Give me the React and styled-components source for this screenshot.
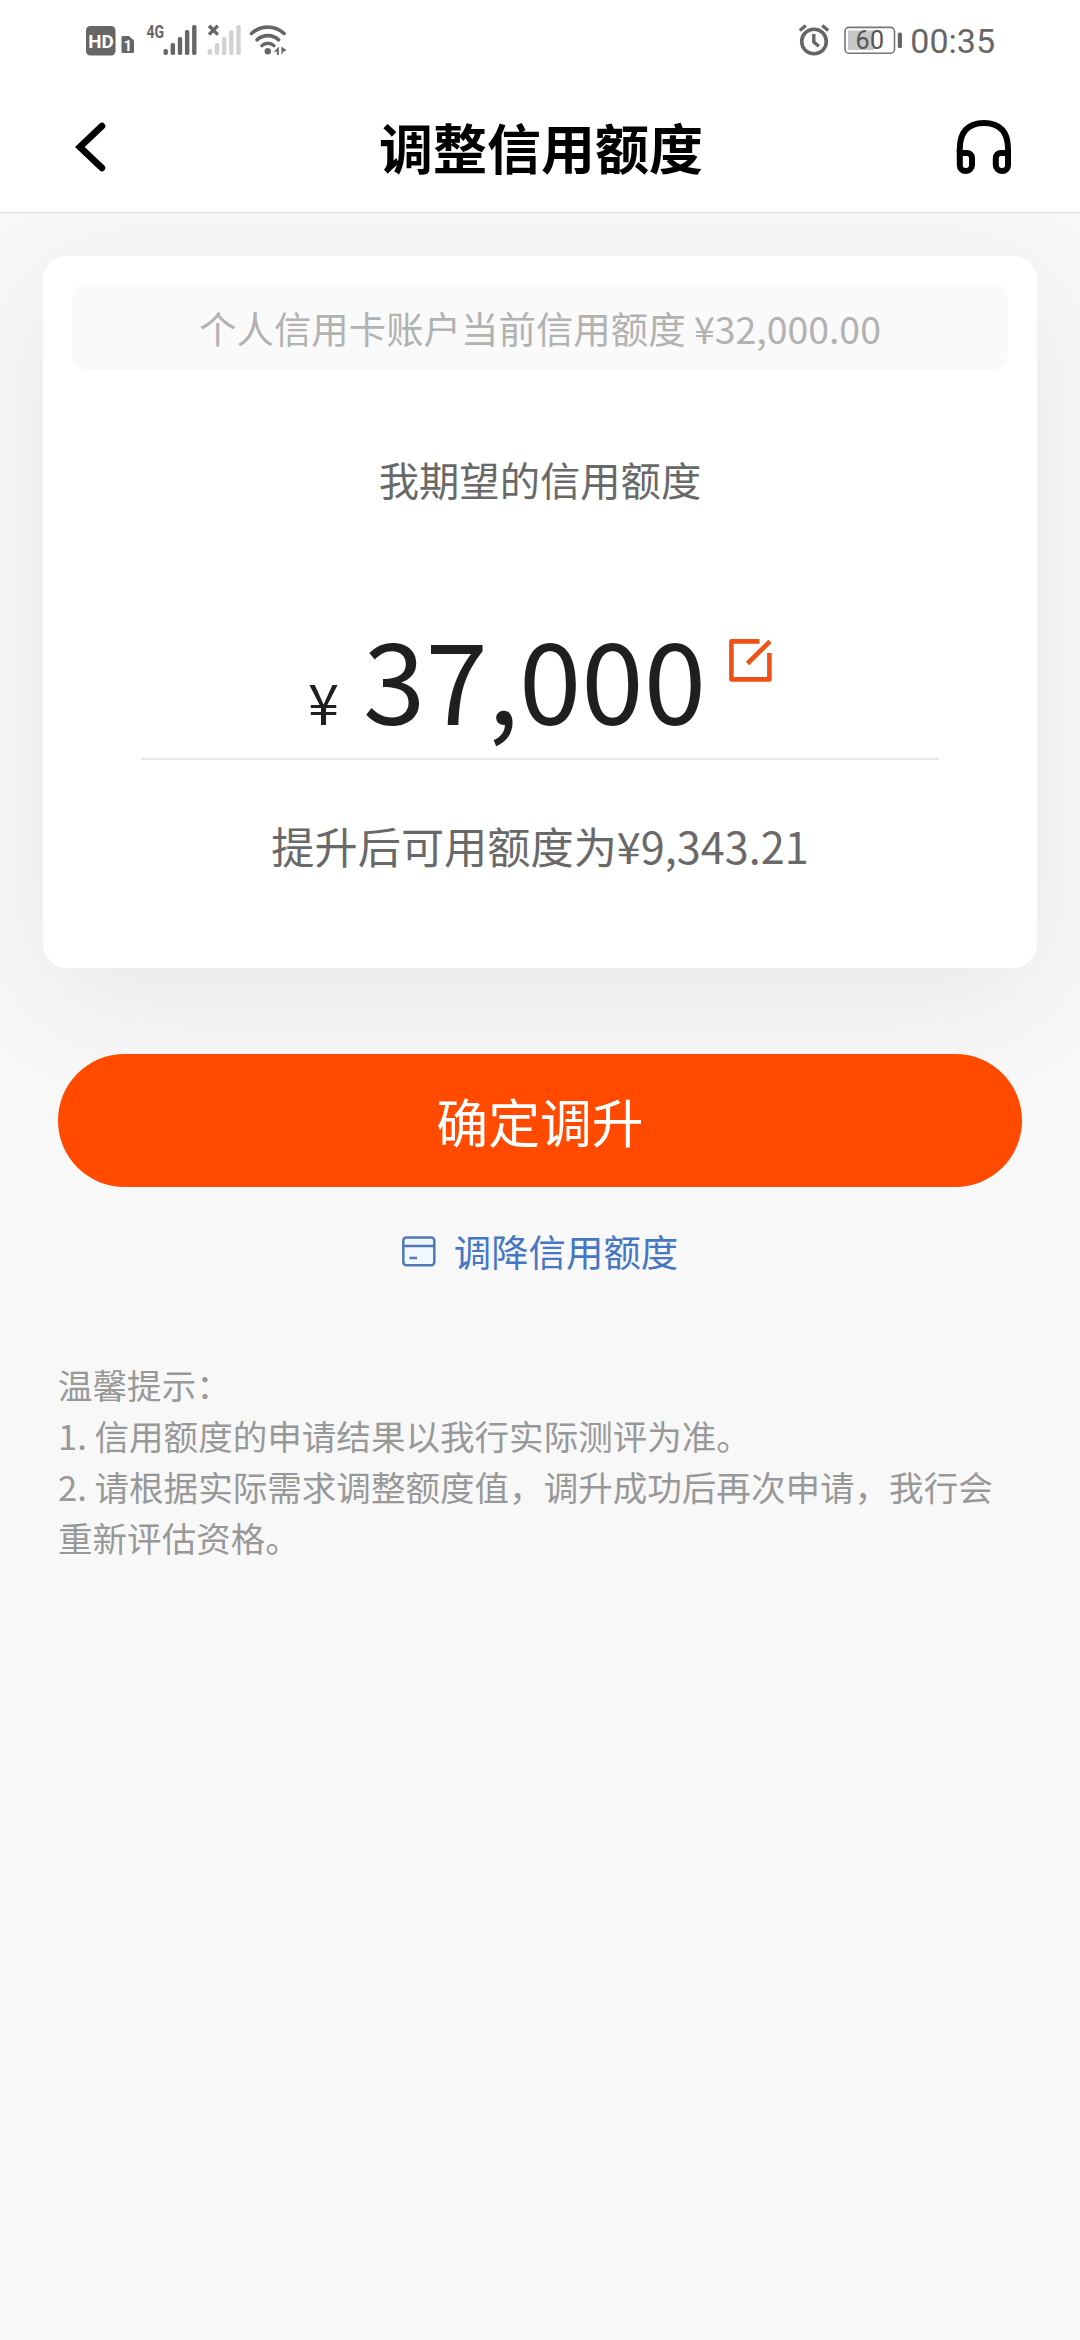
import React from "react";
import styled, { createGlobalStyle } from "styled-components";

const GlobalStyle = createGlobalStyle`
  * {
    box-sizing: border-box;
  }

  body {
    margin: 0;
    background-color: #f8f8f8;
    font-family: "Noto Sans CJK SC", sans-serif;
  }
`;

const Page = styled.div`
  display: flex;
  flex-direction: column;
  min-height: 2340px;
  background-color: #f8f8f8;
  overflow: hidden;
`;

const Header = styled.header`
  position: relative;
  z-index: 1;
  height: 213px;
  background-color: #fff;
  border-bottom: 1px solid #dedede;
`;

const StatusBar = styled.div`
  display: flex;
  justify-content: space-between;
  height: 80px;
  padding: 0 85px 0 86px;
`;

const StatusGroup = styled.div`
  display: flex;
  align-items: flex-start;
`;

const Time = styled.span`
  margin-left: 7px;
  font: 400 34px/82px Roboto, sans-serif;
  color: #666;
`;

const NavBar = styled.nav`
  display: flex;
  align-items: center;
  justify-content: space-between;
  height: 132px;
  padding: 0 66px 0 72px;
`;

const IconButton = styled.button`
  display: flex;
  align-items: center;
  justify-content: ${({ $align }) => $align};
  width: 60px;
  height: 60px;
  margin-top: 2px;
  padding: 0;
  border: 0;
  background-color: transparent;
`;

const Title = styled.h1`
  margin: 2px 4px 0 0;
  font-size: 54px;
  font-weight: 700;
  line-height: 72px;
  color: #000;
`;

const Card = styled.section`
  display: flex;
  flex-direction: column;
  align-items: center;
  height: 712px;
  margin: 43px 43px 0;
  padding: 29px;
  border-radius: 24px;
  background-color: #fff;
  box-shadow: 0 30px 130px rgba(0, 0, 0, 0.07);
`;

const CurrentLimit = styled.div`
  width: 100%;
  height: 85px;
  border-radius: 14px;
  background-color: #fafafa;
  font-size: 37.44px;
  line-height: 86px;
  text-align: center;
  color: #b2b2b2;
`;

const Label = styled.p`
  margin: ${({ $top }) => $top}px 0 0;
  font-size: ${({ $size }) => $size}px;
  line-height: 60px;
  color: #696969;
`;

const Amount = styled.div`
  display: flex;
  align-items: baseline;
  justify-content: center;
  width: 798px;
  height: 168px;
  margin-top: 83px;
  border-bottom: 2px solid #e8e8e8;
  line-height: 169px;
  color: #1f1f1f;
`;

const Currency = styled.span`
  margin-right: 24px;
  font-size: 56px;
`;

const Value = styled.span`
  font-size: 112.32px;
`;

const EditButton = styled.button`
  align-self: flex-start;
  margin: 47px 0 0 23px;
  padding: 0;
  border: 0;
  background-color: transparent;
  line-height: 0;
`;

const Submit = styled.button`
  height: 133px;
  margin: 86px 58px 0;
  padding: 0 0 1px;
  border: 0;
  border-radius: 67px;
  background-color: #ff4a00;
  font-family: inherit;
  font-size: 51.84px;
  color: #fff;
`;

const LowerLink = styled.a`
  display: flex;
  align-items: center;
  justify-content: center;
  gap: 18px;
  height: 60px;
  margin-top: 34px;
  font-size: 37.44px;
  line-height: 60px;
  color: #4677c4;
`;

const Tips = styled.div`
  margin: 78px 58px 0;
  font-size: 34.56px;
  line-height: 51.1px;
  color: #989898;

  p {
    margin: 0;
  }
`;

// height of each signal bar, left to right
const BARS = [6, 12, 18, 25, 30];

const Signal = ({ x, color }) =>
  BARS.map((height, index) => (
    <rect key={height} x={x + index * 7.15} y={55 - height} width="4.4" height={height} rx="1.8" fill={color} />
  ));

const NetworkIcons = () => (
  <svg width="206" height="70" viewBox="86 0 206 70" fill="none">
    <rect x="86" y="26" width="29.5" height="29.5" rx="4.5" fill="#666" />
    <text x="88.3" y="47.5" textLength="25.5" lengthAdjust="spacingAndGlyphs" fontFamily="Roboto" fontSize="19" fontWeight="700" fill="#fff">
      HD
    </text>
    <path d="M123 36h6l5 4.5v11a1.5 1.5 0 0 1-1.5 1.5h-9.5a1.5 1.5 0 0 1-1.5-1.5v-14a1.5 1.5 0 0 1 1.5-1.5z" fill="#666" />
    <text x="123.4" y="50.5" fontFamily="Roboto" fontSize="15" fontWeight="700" fill="#fff">
      1
    </text>
    <text x="146.5" y="38" textLength="17.5" lengthAdjust="spacingAndGlyphs" fontFamily="Roboto" fontSize="18" fontWeight="700" fill="#666">
      4G
    </text>
    <Signal x={163.5} color="#666" />
    <path d="M209 25.8l8.8 8.8M217.8 25.8l-8.8 8.8" stroke="#666" strokeWidth="3.4" />
    <Signal x={207.7} color="#d2d2d2" />
    <g stroke="#666" strokeWidth="3.6" strokeLinecap="round">
      <path d="M251.5 33.5a24 24 0 0 1 32.6 0" />
      <path d="M257 39.8a16 16 0 0 1 21.6 0" />
      <path d="M262 45.5a9 9 0 0 1 11.8 0" />
    </g>
    <circle cx="267.8" cy="51.3" r="3.2" fill="#666" />
    <path d="M278.8 46.5v8.5h-1.9v-3.2h-3zM281.4 46.5l5.2 3.8-3.2 1.4-2 3.3z" fill="#666" />
  </svg>
);

const PowerIcons = () => (
  <svg width="106" height="70" viewBox="796 0 106 70" fill="none">
    <circle cx="813" cy="41.5" r="12.3" stroke="#666" strokeWidth="3.6" />
    <path d="M812.8 34v8l5 4.2" stroke="#666" strokeWidth="3.4" />
    <path d="M798.8 30.5l6-5M821.2 25.5l6 5" stroke="#666" strokeWidth="3.4" />
    <rect x="844" y="27.4" width="49.5" height="25.8" rx="4" stroke="#777" strokeWidth="1.6" />
    <rect x="847" y="30.5" width="26" height="19.5" fill="#c6c6c6" />
    <text x="854.5" y="48.7" textLength="28.5" fontFamily="Roboto" fontSize="25" fill="#555">
      60
    </text>
    <rect x="896.8" y="32.5" width="4.2" height="15.5" rx="1.5" fill="#666" />
  </svg>
);

const BackIcon = () => (
  <svg width="36" height="52" viewBox="72 121 36 52" fill="none">
    <path d="M102 126L79.8 147 102 168" stroke="#000" strokeWidth="6.6" strokeLinecap="round" />
  </svg>
);

const HeadphonesIcon = () => (
  <svg width="60" height="60" viewBox="954 117 60 60" fill="none" stroke="#000" strokeWidth="6">
    <path d="M959.8 153V149C959.8 132 968 123 984 123S1008 132 1008 149V153" />
    <path d="M959.8 153H967A5 5 0 0 1 972 158V165A6 6 0 0 1 966 171H965.5A5.7 5.7 0 0 1 959.8 165.3z" />
    <path d="M1008 153H1000.8A5 5 0 0 0 995.8 158V165A6 6 0 0 0 1001.8 171H1002.3A5.7 5.7 0 0 0 1008 165.3z" />
  </svg>
);

const EditIcon = () => (
  <svg width="43" height="43" viewBox="0 0 43 43" fill="none" stroke="#ee5016" strokeWidth="4.6">
    <path d="M30.5 2.4H2.4v38h38V14" strokeLinejoin="round" />
    <path d="M18.5 24.5L41 2.4" />
  </svg>
);

const CardIcon = () => (
  <svg width="34" height="31" viewBox="0 0 34 31" fill="none" stroke="#5279b5" strokeWidth="2.5">
    <rect x="1.3" y="1.5" width="31" height="27.8" rx="3" fill="#f0f7ff" />
    <path d="M1.3 10h31M7.5 22h7.5" />
  </svg>
);

const App = () => (
  <Page>
    <GlobalStyle />
    <Header>
      <StatusBar>
        <StatusGroup>
          <NetworkIcons />
        </StatusGroup>
        <StatusGroup>
          <PowerIcons />
          <Time>00:35</Time>
        </StatusGroup>
      </StatusBar>
      <NavBar>
        <IconButton $align="flex-start" aria-label="返回">
          <BackIcon />
        </IconButton>
        <Title>调整信用额度</Title>
        <IconButton $align="flex-end" aria-label="客服">
          <HeadphonesIcon />
        </IconButton>
      </NavBar>
    </Header>

    <Card>
      <CurrentLimit>个人信用卡账户当前信用额度 ¥32,000.00</CurrentLimit>
      <Label $top={79} $size={40.32}>
        我期望的信用额度
      </Label>
      <Amount>
        <Currency>¥</Currency>
        <Value>37,000</Value>
        <EditButton aria-label="修改">
          <EditIcon />
        </EditButton>
      </Amount>
      <Label $top={55} $size={43.2}>
        提升后可用额度为¥9,343.21
      </Label>
    </Card>

    <Submit>确定调升</Submit>
    <LowerLink>
      <CardIcon />
      调降信用额度
    </LowerLink>

    <Tips>
      <p>温馨提示：</p>
      <p>1. 信用额度的申请结果以我行实际测评为准。</p>
      <p>2. 请根据实际需求调整额度值，调升成功后再次申请，我行会重新评估资格。</p>
    </Tips>
  </Page>
);

export default App;
